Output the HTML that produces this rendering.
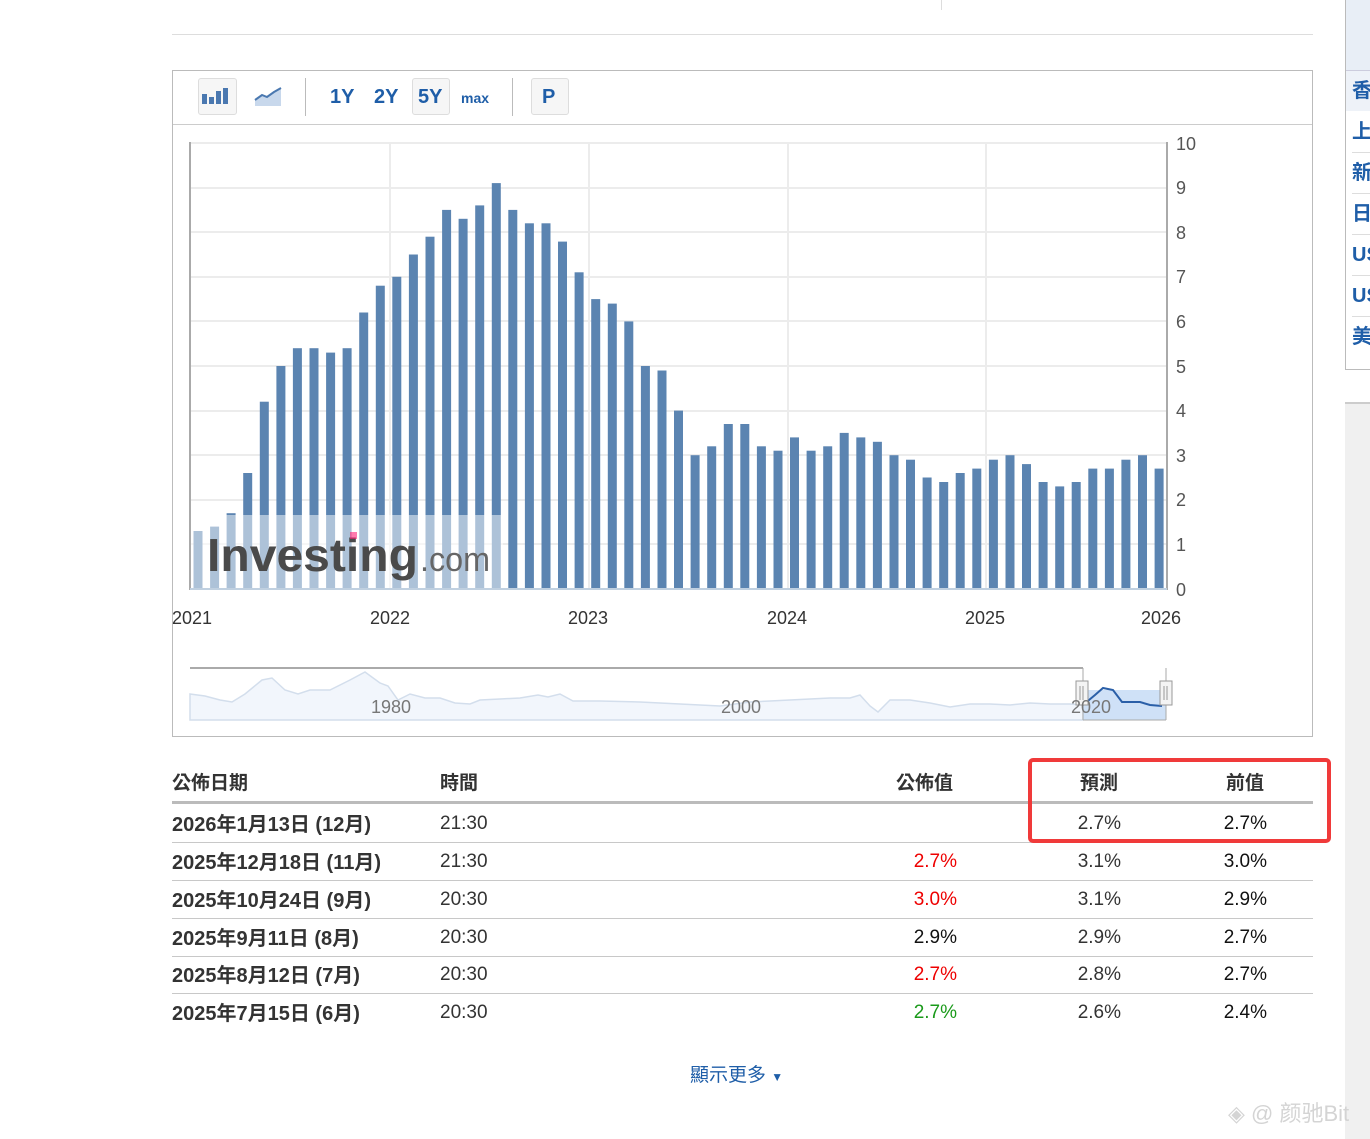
<!DOCTYPE html>
<html><head><meta charset="utf-8">
<style>
body{margin:0;width:1370px;height:1137px;background:#fff;position:relative;overflow:hidden;font-family:"Liberation Sans","Noto Sans CJK TC",sans-serif;}
.a{position:absolute;}
.btn{position:absolute;top:78px;height:37px;border:1px solid #ddd;border-radius:3px;background:#f6f6f6;box-sizing:border-box;}
.t{position:absolute;color:#1f5ea8;font-weight:bold;font-size:20px;}
.row{position:absolute;left:172px;width:1141px;height:38px;border-bottom:1px solid #c8c8c8;font-size:19px;color:#333;}
.row span{position:absolute;top:9px;}
.row span.d{left:0;font-weight:bold;font-size:20px;top:4px;}
.tm{left:268px;}
.v{right:356px;}
.f{right:192px;}
.p{right:46px;color:#111;}
.red{color:#e00;}
.grn{color:#1a9a1a;}
</style></head><body>
<div class="a" style="left:172px;top:34px;width:1141px;height:1px;background:#ddd"></div>
<div class="a" style="left:941px;top:0;width:1px;height:10px;background:#ddd"></div>
<div class="a" style="left:1345px;top:0;width:30px;height:369px;border-left:1px solid #bbb;border-bottom:1px solid #bbb;"></div>
<div class="a" style="left:1346px;top:0;width:24px;height:70px;background:#e8eef6"></div>
<div class="a" style="left:1346px;top:70px;width:24px;height:40px;background:#eef2f8;border-top:1px solid #ccd"></div>
<div class="a" style="left:1352px;top:71px;font-size:20px;color:#1f5ea8;line-height:41px;font-weight:bold">香<br>上<br>新<br>日<br>US<br>US<br>美</div>
<div class="a" style="left:1352px;top:152px;width:18px;height:1px;background:#ddd;box-shadow:0 41px 0 #ddd,0 82px 0 #ddd,0 123px 0 #ddd,0 164px 0 #ddd"></div>
<div class="a" style="left:1345px;top:402px;width:25px;height:735px;background:#f0f0f0;border-top:2px solid #ccc"></div>

<div class="a" style="left:172px;top:70px;width:1139px;height:665px;border:1px solid #bbb"></div>
<div class="a" style="left:173px;top:124px;width:1139px;height:1px;background:#ccc"></div>
<div class="btn" style="left:198px;width:39px"></div>
<svg class="a" style="left:202px;top:86px" width="30" height="20"><rect x="0" y="8" width="5" height="10" fill="#4a78b0"/><rect x="7" y="11" width="5" height="7" fill="#4a78b0"/><rect x="14" y="5" width="5" height="13" fill="#4a78b0"/><rect x="21" y="2" width="5" height="16" fill="#4a78b0"/></svg>
<svg class="a" style="left:254px;top:86px" width="30" height="22"><path d="M1 14 L8 9 L13 11 L20 6 L27 2 L27 20 L1 20Z" fill="#c8d8ec"/><path d="M1 14 L8 9 L13 11 L20 6 L27 2" stroke="#4a78b0" stroke-width="2" fill="none"/></svg>
<div class="a" style="left:305px;top:78px;width:1px;height:38px;background:#bbb"></div>
<div class="t" style="left:330px;top:86px">1Y</div>
<div class="t" style="left:374px;top:86px">2Y</div>
<div class="btn" style="left:412px;width:38px"></div>
<div class="t" style="left:418px;top:86px">5Y</div>
<div class="t" style="left:461px;top:90px;font-size:14px">max</div>
<div class="a" style="left:512px;top:78px;width:1px;height:38px;background:#bbb"></div>
<div class="btn" style="left:531px;width:38px"></div>
<div class="t" style="left:542px;top:86px">P</div>

<svg class="a" style="left:0;top:0" width="1370" height="740" font-family="Liberation Sans, sans-serif">
<g stroke="#ececec" stroke-width="2">
<line x1="190" y1="143" x2="1166" y2="143"/><line x1="190" y1="188" x2="1166" y2="188"/><line x1="190" y1="232" x2="1166" y2="232"/><line x1="190" y1="277" x2="1166" y2="277"/><line x1="190" y1="321" x2="1166" y2="321"/><line x1="190" y1="366" x2="1166" y2="366"/><line x1="190" y1="411" x2="1166" y2="411"/><line x1="190" y1="455" x2="1166" y2="455"/><line x1="190" y1="500" x2="1166" y2="500"/><line x1="190" y1="544" x2="1166" y2="544"/>
<line x1="390" y1="143" x2="390" y2="589"/><line x1="589" y1="143" x2="589" y2="589"/><line x1="788" y1="143" x2="788" y2="589"/><line x1="986" y1="143" x2="986" y2="589"/>
</g>
<line x1="190" y1="142" x2="190" y2="590" stroke="#aaa" stroke-width="2"/>
<line x1="1167" y1="142" x2="1167" y2="590" stroke="#aaa" stroke-width="2"/>
<g fill="#5b84b1">
<rect x="193.5" y="531" width="9" height="58"/><rect x="210.1" y="526.6" width="9" height="62.4"/><rect x="226.6" y="513.2" width="9" height="75.8"/><rect x="243.2" y="473" width="9" height="116"/><rect x="259.8" y="401.7" width="9" height="187.3"/><rect x="276.4" y="366" width="9" height="223"/><rect x="292.9" y="348.2" width="9" height="240.8"/><rect x="309.5" y="348.2" width="9" height="240.8"/><rect x="326.1" y="352.6" width="9" height="236.4"/><rect x="342.6" y="348.2" width="9" height="240.8"/><rect x="359.2" y="312.5" width="9" height="276.5"/><rect x="375.8" y="285.7" width="9" height="303.3"/><rect x="392.3" y="276.8" width="9" height="312.2"/><rect x="408.9" y="254.5" width="9" height="334.5"/><rect x="425.5" y="236.7" width="9" height="352.3"/><rect x="442.1" y="209.9" width="9" height="379.1"/><rect x="458.6" y="218.8" width="9" height="370.2"/><rect x="475.2" y="205.4" width="9" height="383.6"/><rect x="491.8" y="183.1" width="9" height="405.9"/><rect x="508.3" y="209.9" width="9" height="379.1"/><rect x="524.9" y="223.3" width="9" height="365.7"/><rect x="541.5" y="223.3" width="9" height="365.7"/><rect x="558" y="241.6" width="9" height="347.4"/><rect x="574.6" y="272.3" width="9" height="316.7"/><rect x="591.2" y="299.1" width="9" height="289.9"/><rect x="607.8" y="303.6" width="9" height="285.4"/><rect x="624.3" y="321.4" width="9" height="267.6"/><rect x="640.9" y="366" width="9" height="223"/><rect x="657.5" y="370.5" width="9" height="218.5"/><rect x="674" y="410.6" width="9" height="178.4"/><rect x="690.6" y="455.2" width="9" height="133.8"/><rect x="707.2" y="446.3" width="9" height="142.7"/><rect x="723.8" y="424" width="9" height="165"/><rect x="740.3" y="424" width="9" height="165"/><rect x="756.9" y="446.3" width="9" height="142.7"/><rect x="773.5" y="450.7" width="9" height="138.3"/><rect x="790" y="437.4" width="9" height="151.6"/><rect x="806.6" y="450.7" width="9" height="138.3"/><rect x="823.2" y="446.3" width="9" height="142.7"/><rect x="839.7" y="432.9" width="9" height="156.1"/><rect x="856.3" y="437.4" width="9" height="151.6"/><rect x="872.9" y="441.8" width="9" height="147.2"/><rect x="889.5" y="455.2" width="9" height="133.8"/><rect x="906" y="459.7" width="9" height="129.3"/><rect x="922.6" y="477.5" width="9" height="111.5"/><rect x="939.2" y="482" width="9" height="107"/><rect x="955.7" y="473" width="9" height="116"/><rect x="972.3" y="468.6" width="9" height="120.4"/><rect x="988.9" y="459.7" width="9" height="129.3"/><rect x="1005.5" y="455.2" width="9" height="133.8"/><rect x="1022" y="464.1" width="9" height="124.9"/><rect x="1038.6" y="482" width="9" height="107"/><rect x="1055.2" y="486.4" width="9" height="102.6"/><rect x="1071.7" y="482" width="9" height="107"/><rect x="1088.3" y="468.6" width="9" height="120.4"/><rect x="1104.9" y="468.6" width="9" height="120.4"/><rect x="1121.4" y="459.7" width="9" height="129.3"/><rect x="1138" y="455.2" width="9" height="133.8"/><rect x="1154.6" y="468.6" width="9" height="120.4"/>
</g>
<rect x="191" y="515" width="312" height="74" fill="#fff" opacity="0.5"/>
<text x="207" y="571" font-size="46" font-weight="bold" fill="#4a4a4a" textLength="211" lengthAdjust="spacingAndGlyphs">Investing</text>
<text x="420" y="571" font-size="34" fill="#666" textLength="70" lengthAdjust="spacingAndGlyphs">.com</text>
<rect x="350" y="532" width="7" height="7" fill="#f27" opacity="0.6"/>
<line x1="190" y1="589" x2="1167" y2="589" stroke="#c0d0e0" stroke-width="2"/>
<g font-size="18" fill="#555">
<text x="1176" y="150">10</text><text x="1176" y="194">9</text><text x="1176" y="239">8</text><text x="1176" y="283">7</text><text x="1176" y="328">6</text><text x="1176" y="373">5</text><text x="1176" y="417">4</text><text x="1176" y="462">3</text><text x="1176" y="506">2</text><text x="1176" y="551">1</text><text x="1176" y="596">0</text>
</g>
<g font-size="18" fill="#333">
<text x="172" y="624">2021</text><text x="370" y="624">2022</text><text x="568" y="624">2023</text><text x="767" y="624">2024</text><text x="965" y="624">2025</text><text x="1141" y="624">2026</text>
</g>
<path d="M190 694 L205 696 L220 700 L232 702 L245 694 L262 680 L272 678 L285 690 L298 694 L310 690 L330 690 L350 680 L365 672 L380 683 L388 686 L398 700 L410 694 L425 698 L440 698 L455 703 L470 704 L480 700 L500 699 L520 698 L538 695 L548 697 L560 694 L573 701 L600 701 L640 702 L680 704 L720 706 L750 702 L770 701 L790 700 L810 699 L830 698 L850 698 L860 695 L870 706 L878 712 L890 700 L910 700 L930 703 L950 707 L970 704 L990 704 L1010 705 L1030 703 L1050 704 L1070 704 L1083 705 L1083 720 L190 720Z" fill="#f2f6fc" stroke="#d3deec" stroke-width="1.5"/>
<rect x="1083" y="690" width="83" height="30" fill="#cfe1f7"/>
<path d="M1083 705 L1095 695 L1103 688 L1113 690 L1122 702 L1140 702 L1150 705 L1162 706" stroke="#2a5fa8" stroke-width="2" fill="none"/>
<line x1="190" y1="668" x2="1083" y2="668" stroke="#aaa" stroke-width="2"/>
<line x1="1083" y1="668" x2="1083" y2="720" stroke="#aaa"/>
<line x1="1166" y1="668" x2="1166" y2="720" stroke="#aaa"/>
<line x1="1083" y1="720" x2="1166" y2="720" stroke="#aaa"/>
<rect x="1076" y="681" width="12" height="24" fill="#f4f4f4" stroke="#999"/>
<rect x="1160" y="681" width="12" height="24" fill="#f4f4f4" stroke="#999"/>
<g stroke="#999"><line x1="1080" y1="686" x2="1080" y2="700"/><line x1="1083" y1="686" x2="1083" y2="700"/><line x1="1164" y1="686" x2="1164" y2="700"/><line x1="1167" y1="686" x2="1167" y2="700"/></g>
<g font-size="18" fill="#777"><text x="371" y="713">1980</text><text x="721" y="713">2000</text><text x="1071" y="713">2020</text></g>
</svg>

<div class="a" style="left:172px;top:768px;font-size:19px;font-weight:bold;color:#333">公佈日期</div>
<div class="a" style="left:440px;top:768px;font-size:19px;font-weight:bold;color:#333">時間</div>
<div class="a" style="left:896px;top:768px;font-size:19px;font-weight:bold;color:#333">公佈值</div>
<div class="a" style="left:1080px;top:768px;font-size:19px;font-weight:bold;color:#333">預測</div>
<div class="a" style="left:1226px;top:768px;font-size:19px;font-weight:bold;color:#333">前值</div>
<div class="a" style="left:172px;top:801px;width:1141px;height:3px;background:#bbb"></div>
<div class="row" style="top:804px"><span class="d">2026年1月13日 (12月)</span><span class="tm">21:30</span><span class="f">2.7%</span><span class="p">2.7%</span></div>
<div class="row" style="top:842px"><span class="d">2025年12月18日 (11月)</span><span class="tm">21:30</span><span class="v red">2.7%</span><span class="f">3.1%</span><span class="p">3.0%</span></div>
<div class="row" style="top:880px"><span class="d">2025年10月24日 (9月)</span><span class="tm">20:30</span><span class="v red">3.0%</span><span class="f">3.1%</span><span class="p">2.9%</span></div>
<div class="row" style="top:918px"><span class="d">2025年9月11日 (8月)</span><span class="tm">20:30</span><span class="v" style="color:#111">2.9%</span><span class="f">2.9%</span><span class="p">2.7%</span></div>
<div class="row" style="top:955px"><span class="d">2025年8月12日 (7月)</span><span class="tm">20:30</span><span class="v red">2.7%</span><span class="f">2.8%</span><span class="p">2.7%</span></div>
<div class="row" style="top:993px;border-bottom:none"><span class="d">2025年7月15日 (6月)</span><span class="tm">20:30</span><span class="v grn">2.7%</span><span class="f">2.6%</span><span class="p">2.4%</span></div>
<div class="a" style="left:1028px;top:758px;width:295px;height:77px;border:4px solid #f03a3a;border-radius:5px"></div>

<div class="a" style="left:690px;top:1060px;font-size:19px;color:#1f5ea8">顯示更多 <span style="font-size:12px">▼</span></div>
<div class="a" style="left:1228px;top:1096px;font-size:22px;color:#d4d4d4">◈ @ 颜驰Bit</div>
</body></html>
